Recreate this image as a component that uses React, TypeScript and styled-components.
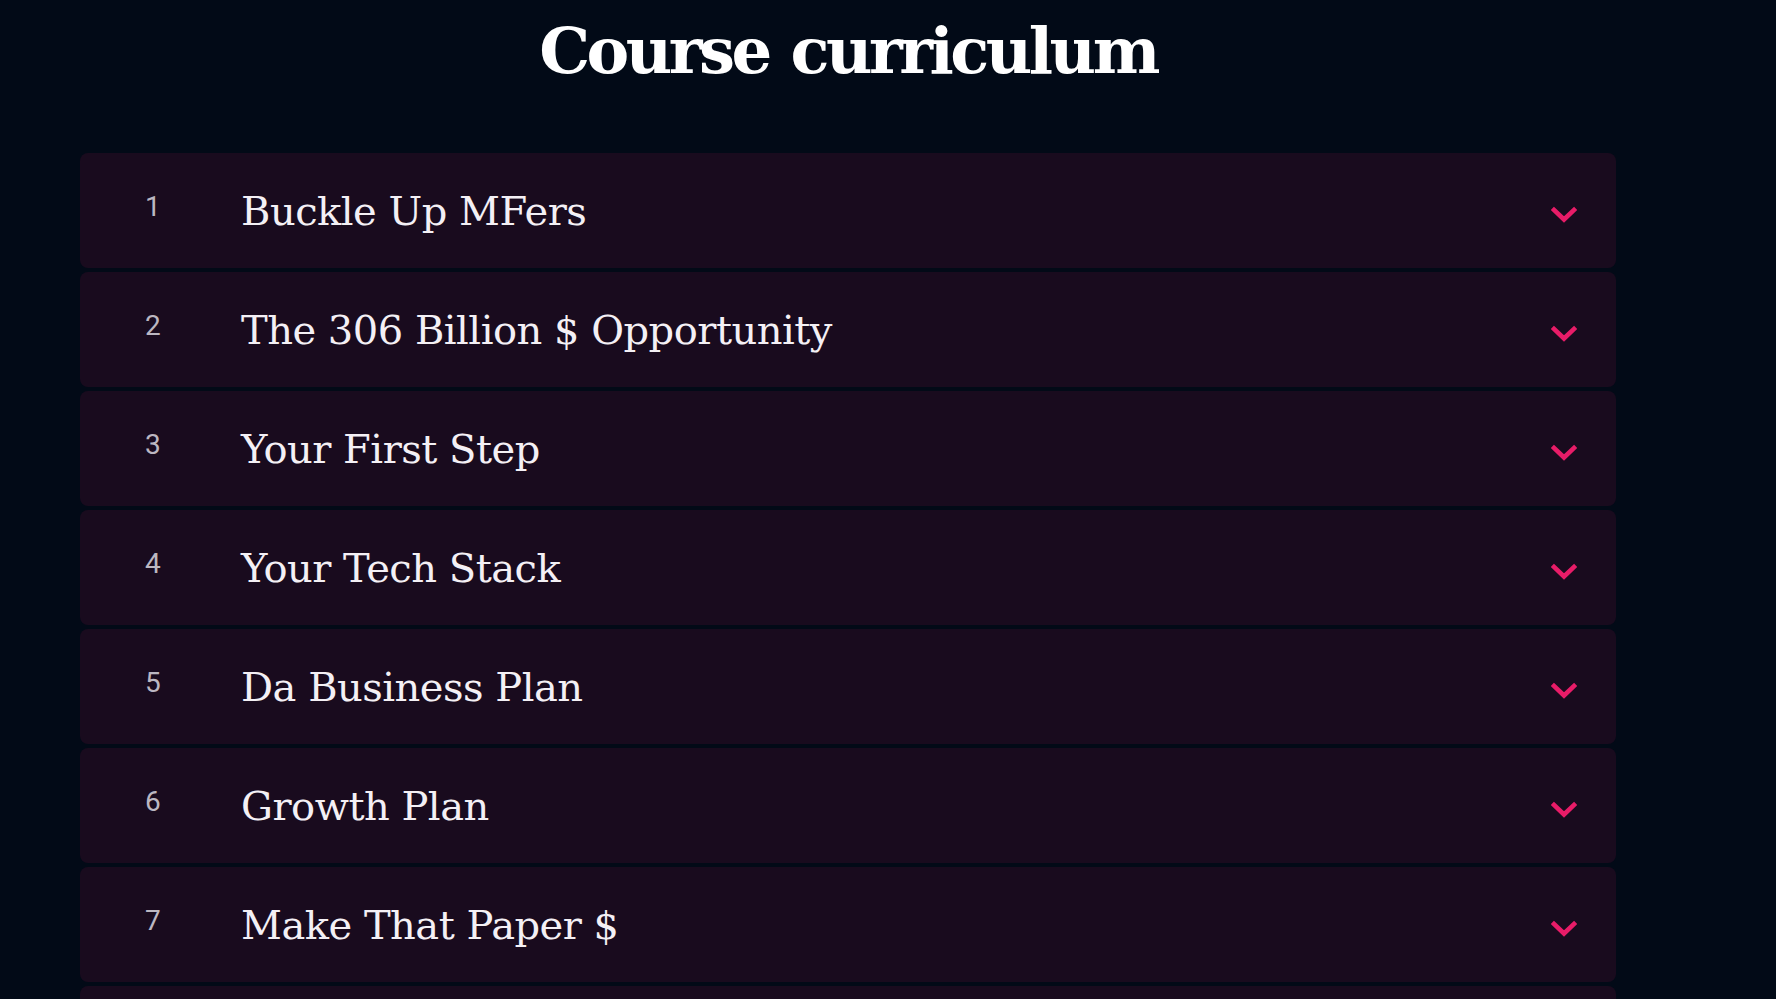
import styled, { createGlobalStyle } from "styled-components";

const GlobalStyle = createGlobalStyle`
  html, body {
    margin: 0;
    padding: 0;
    background: #020a17;
  }
`;

const lessons = [
  "Buckle Up MFers",
  "The 306 Billion $ Opportunity",
  "Your First Step",
  "Your Tech Stack",
  "Da Business Plan",
  "Growth Plan",
  "Make That Paper $",
];

function Chevron() {
  return (
    <svg width="26" height="18" viewBox="0 0 26 18" fill="none">
      <polyline
        points="3,4 13,13.5 23,4"
        stroke="#e81c68"
        strokeWidth="4.6"
        strokeLinecap="square"
        strokeLinejoin="miter"
      />
    </svg>
  );
}

function App() {
  return (
    <Page>
      <GlobalStyle />
      <Wrap>
        <Heading>Course curriculum</Heading>
        <List>
          {lessons.map((title, i) => (
            <Row key={title}>
              <Num>{i + 1}</Num>
              <Title>{title}</Title>
              <Toggle>
                <Chevron />
              </Toggle>
            </Row>
          ))}
          {/* next lesson peeks in at the bottom edge */}
          <Row />
        </List>
      </Wrap>
    </Page>
  );
}

export default App;

const Page = styled.div`
  height: 100vh;
  background: #020a17;
  overflow: hidden;
`;

const Wrap = styled.div`
  padding: 0 160px 0 80px;
`;

const Heading = styled.h1`
  margin: 0;
  padding-top: 9px;
  text-align: center;
  color: #ffffff;
  font-family: "DejaVu Serif", "Liberation Serif", serif;
  font-weight: 700;
  font-size: 64px;
  line-height: 84px;
  letter-spacing: -3.5px;
  word-spacing: 3px;
`;

const List = styled.div`
  display: flex;
  flex-direction: column;
  gap: 4px;
  margin-top: 60px;
`;

const Row = styled.div`
  display: flex;
  align-items: center;
  height: 115px;
  padding: 0 39px 0 65px;
  background: #190b1e;
  border-radius: 8px;
  box-sizing: border-box;
  flex: none;
`;

const Num = styled.div`
  width: 96px;
  flex: none;
  margin-bottom: 8px;
  color: #bcb7c1;
  font-family: Roboto, "Liberation Sans", sans-serif;
  font-size: 28px;
  line-height: 30px;
`;

const Title = styled.div`
  flex: 1;
  color: #f4f0f5;
  font-family: "DejaVu Serif", "Liberation Serif", serif;
  font-size: 40px;
  line-height: 46px;
  letter-spacing: -0.5px;
`;

const Toggle = styled.div`
  display: flex;
  margin-top: 8px;
`;
